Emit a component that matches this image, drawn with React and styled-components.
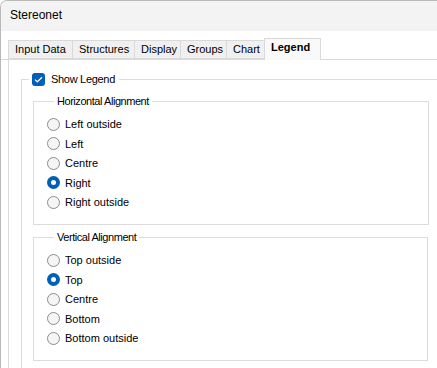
import React, { useState } from 'react';
import styled, { createGlobalStyle } from 'styled-components';

/** Global styles. */

const GlobalStyle = createGlobalStyle`
	html, body {
		margin: 0;
		padding: 0;
		background: #ffffff;
	}

	body {
		font-family: 'Segoe UI', 'Liberation Sans', Arial, sans-serif;
		font-size: 11px;
		color: #000000;
	}
`;

/** Module styles. */

const Window = styled.div`
	width: 437px;
	height: 368px;
	box-sizing: border-box;
	border-top: 1px solid #b9b9b9;
	border-left: 1px solid #b9b9b9;
	border-top-left-radius: 7px;
	overflow: hidden;
	background: #ffffff;
	display: flex;
	flex-direction: column;
`;

const TitleBar = styled.div`
	height: 30px;
	line-height: 29px;
	padding-left: 9px;
	background: #f3f3f3;
	font-size: 12px;
	flex-shrink: 0;
`;

const Body = styled.div`
	flex: 1;
	padding-top: 7px;
	display: flex;
	flex-direction: column;
`;

const TabStrip = styled.div`
	display: flex;
	align-items: flex-end;
	height: 22px;
	box-sizing: border-box;
	padding-left: 7px;
	border-bottom: 1px solid #dadada;
`;

const Tab = styled.div`
	width: ${props => props.width}px;
	height: ${props => (props.active ? 22 : 19)}px;
	margin-left: -1px;
	margin-bottom: ${props => (props.active ? -1 : 0)}px;
	box-sizing: border-box;
	padding-left: 6px;
	border: 1px solid #d9d9d9;
	border-bottom: ${props => (props.active ? 'none' : '1px solid #d9d9d9')};
	background: ${props => (props.active ? '#f9f9f9' : '#f0f0f0')};
	font-weight: ${props => (props.active ? 700 : 400)};
	line-height: ${props => (props.active ? 17 : 16)}px;
	position: relative;
	z-index: ${props => (props.active ? 1 : 0)};
	cursor: default;

	&:first-child {
		margin-left: 0;
	}
`;

const Pane = styled.div`
	flex: 1;
	margin-left: 7px;
	padding-top: 11px;
	border-left: 1px solid #dadada;
	padding-left: 12px;
	overflow: hidden;
`;

const OuterGroup = styled.fieldset`
	margin: 0;
	padding: 0 0 20px 0;
	width: 460px;
	box-sizing: border-box;
	border: 1px solid #dcdcdc;
	min-inline-size: 0;
`;

const OuterLegend = styled.legend`
	margin-left: 7px;
	padding: 0 4px 0 3px;
	height: 16px;
	display: flex;
	align-items: center;
	gap: 6px;
	line-height: 16px;
	letter-spacing: -0.3px;
`;

const CheckBox = styled.span`
	width: 13px;
	height: 13px;
	box-sizing: border-box;
	border-radius: 3px;
	background: #005fb8;
	display: flex;
	align-items: center;
	justify-content: center;
`;

const Group = styled.fieldset`
	margin: ${props => (props.first ? 6 : 4)}px 0 0 11px;
	padding: 5.5px 0 12px 13px;
	width: ${props => props.width}px;
	box-sizing: border-box;
	border: 1px solid #dcdcdc;
	min-inline-size: 0;
`;

const GroupLegend = styled.legend`
	margin-left: 7px;
	padding: 0 3px;
	line-height: 16px;
	letter-spacing: -0.45px;
`;

const RadioRow = styled.label`
	display: flex;
	align-items: center;
	height: 19.5px;
	cursor: default;
`;

const RadioDot = styled.span`
	width: 13px;
	height: 13px;
	box-sizing: border-box;
	border-radius: 50%;
	margin-right: 5px;
	flex-shrink: 0;
	border: ${props => (props.checked ? 'none' : '1px solid #8b8b8b')};
	background: ${props => (props.checked ? '#005fb8' : '#f5f5f5')};
	display: flex;
	align-items: center;
	justify-content: center;

	&::after {
		content: '';
		display: ${props => (props.checked ? 'block' : 'none')};
		width: 5px;
		height: 5px;
		border-radius: 50%;
		background: #ffffff;
	}
`;

/* Data. */

const tabs = [
	{ label: 'Input Data', width: 65 },
	{ label: 'Structures', width: 63 },
	{ label: 'Display', width: 47 },
	{ label: 'Groups', width: 47 },
	{ label: 'Chart', width: 39 },
	{ label: 'Legend', width: 57 },
];

const horizontalOptions = ['Left outside', 'Left', 'Centre', 'Right', 'Right outside'];
const verticalOptions = ['Top outside', 'Top', 'Centre', 'Bottom', 'Bottom outside'];

function RadioGroup({ options, value, onChange }) {
	return options.map(option => (
		<RadioRow key={option} onClick={() => onChange(option)}>
			<RadioDot checked={option === value} />
			{option}
		</RadioRow>
	));
}

/* Function `App` page. */

function App() {
	const [activeTab] = useState('Legend');
	const [horizontal, setHorizontal] = useState('Right');
	const [vertical, setVertical] = useState('Top');

	return (
		<>
			<GlobalStyle />
			<Window>
				<TitleBar>Stereonet</TitleBar>
				<Body>
					<TabStrip>
						{tabs.map(tab => (
							<Tab key={tab.label} width={tab.width} active={tab.label === activeTab}>
								{tab.label}
							</Tab>
						))}
					</TabStrip>
					<Pane>
						<OuterGroup>
							<OuterLegend>
								<CheckBox>
									<svg width="9" height="7" viewBox="0 0 9 7">
										<path
											d="M1 3.6 L3.3 5.8 L8 1.2"
											fill="none"
											stroke="#ffffff"
											strokeWidth="1.2"
										/>
									</svg>
								</CheckBox>
								Show Legend
							</OuterLegend>
							<Group first width={396}>
								<GroupLegend>Horizontal Alignment</GroupLegend>
								<RadioGroup
									options={horizontalOptions}
									value={horizontal}
									onChange={setHorizontal}
								/>
							</Group>
							<Group width={395}>
								<GroupLegend>Vertical Alignment</GroupLegend>
								<RadioGroup
									options={verticalOptions}
									value={vertical}
									onChange={setVertical}
								/>
							</Group>
						</OuterGroup>
					</Pane>
				</Body>
			</Window>
		</>
	);
}

export default App;
